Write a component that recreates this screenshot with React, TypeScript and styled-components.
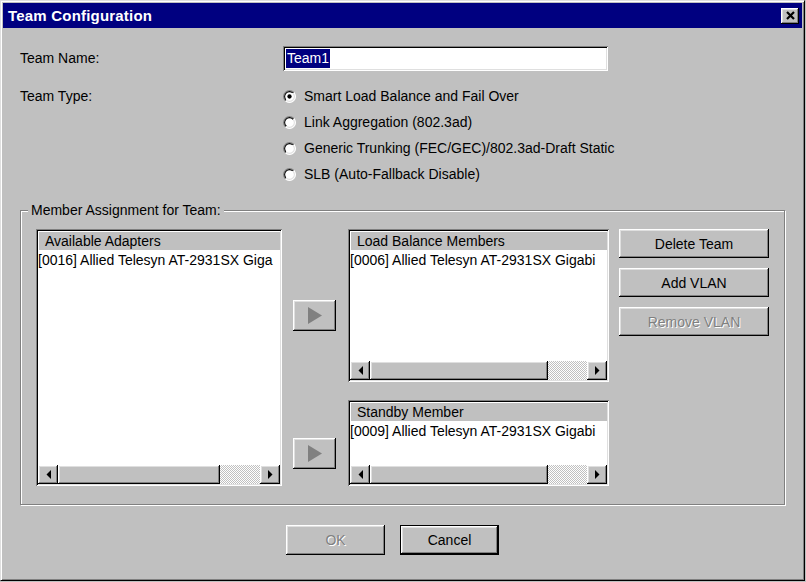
import React, { FC } from "react";
import styled, { createGlobalStyle } from "styled-components";

const GlobalStyle = createGlobalStyle`
  html, body {
    margin: 0;
    padding: 0;
    background: #c0c0c0;
  }
`;

const raised = `
  box-shadow: inset -1px -1px #000, inset 1px 1px #fff, inset -2px -2px #808080, inset 2px 2px #dfdfdf;
`;

const sunken = `
  box-shadow: inset 1px 1px #808080, inset -1px -1px #fff, inset 2px 2px #000, inset -2px -2px #dfdfdf;
`;

const Window = styled.div`
  width: 805px;
  height: 581px;
  box-sizing: border-box;
  background: #c0c0c0;
  border-top: 1px solid #dfdfdf;
  border-left: 1px solid #dfdfdf;
  border-right: 1px solid #000;
  border-bottom: 1px solid #000;
  box-shadow: inset 1px 1px #fff, inset -1px -1px #808080;
  padding: 2px;
  display: flex;
  flex-direction: column;
  font-family: "Liberation Sans", Arial, sans-serif;
  font-size: 14px;
  color: #000;
`;

const TitleBar = styled.div`
  height: 25px;
  background: #000080;
  display: flex;
  align-items: center;
  justify-content: space-between;
  padding: 0 3px 0 5px;
`;

const Title = styled.span`
  color: #fff;
  font-weight: bold;
  font-size: 15px;
  letter-spacing: 0.2px;
`;

const CloseButton = styled.div`
  width: 18px;
  height: 16px;
  background: #c0c0c0;
  ${raised}
  display: flex;
  align-items: center;
  justify-content: center;
`;

const Content = styled.div`
  display: flex;
  flex-direction: column;
  padding: 17px 17px 0 17px;
`;

const FieldRow = styled.div<{ $top?: number }>`
  display: flex;
  align-items: ${(p) => (p.$top ? "flex-start" : "center")};
  margin-top: ${(p) => p.$top || 0}px;
`;

const FieldLabel = styled.div`
  width: 263px;
  line-height: 26px;
`;

const TextInput = styled.div`
  width: 325px;
  height: 25px;
  box-sizing: border-box;
  background: #fff;
  ${sunken}
  padding: 3px 3px 0 3px;
  display: flex;
  align-items: flex-start;
`;

const Selected = styled.span`
  background: #000080;
  color: #fff;
  padding: 0 1px;
  line-height: 19px;
`;

const RadioList = styled.div`
  display: flex;
  flex-direction: column;
`;

const RadioRow = styled.div`
  height: 26px;
  display: flex;
  align-items: center;
  gap: 8px;
`;

const Group = styled.div`
  position: relative;
  margin-top: 23px;
  width: 765px;
  height: 295px;
  box-sizing: border-box;
  border: 1px solid #808080;
  box-shadow: inset 1px 1px #fff, 1px 1px #fff;
  padding: 18px 15px 0 15px;
  display: flex;
`;

const Legend = styled.span`
  position: absolute;
  top: -9px;
  left: 7px;
  padding: 0 3px;
  background: #c0c0c0;
  line-height: 17px;
`;

const ListBox = styled.div<{ $w: number; $h: number }>`
  width: ${(p) => p.$w}px;
  height: ${(p) => p.$h}px;
  box-sizing: border-box;
  background: #fff;
  ${sunken}
  padding: 2px;
  display: flex;
  flex-direction: column;
  overflow: hidden;
`;

const ListHeader = styled.div`
  height: 19px;
  flex: none;
  box-sizing: border-box;
  background: #c0c0c0;
  border-top: 1px solid #fff;
  border-left: 1px solid #fff;
  padding-left: 6px;
  line-height: 18px;
  white-space: nowrap;
`;

const ListItems = styled.div`
  flex: 1;
  padding: 2px 0 0 0;
  white-space: nowrap;
  overflow: hidden;
  line-height: 17px;
`;

const ScrollBar = styled.div`
  height: 19px;
  flex: none;
  display: flex;
  background: repeating-conic-gradient(#c0c0c0 0% 25%, #fff 0% 50%) 0 0 / 2px 2px;
`;

const ScrollButton = styled.div`
  width: 20px;
  flex: none;
  background: #c0c0c0;
  ${raised}
  display: flex;
  align-items: center;
  justify-content: center;
`;

const ScrollTrack = styled.div`
  flex: 1;
  display: flex;
`;

const ScrollThumb = styled.div<{ $frac: number }>`
  width: ${(p) => p.$frac * 100}%;
  background: #c0c0c0;
  ${raised}
`;

const MidArea = styled.div`
  margin-left: 11px;
  display: grid;
  grid-template-columns: 43px 261px;
  grid-template-rows: 153px 86px;
  column-gap: 12px;
  row-gap: 18px;
`;

const ArrowCell = styled.div`
  padding-top: 20px;
  display: flex;
  align-items: center;
`;

const ArrowButton = styled.div`
  width: 43px;
  height: 31px;
  background: #c0c0c0;
  ${raised}
  display: flex;
  align-items: center;
  justify-content: center;
`;

const SideButtons = styled.div`
  margin-left: 10px;
  display: flex;
  flex-direction: column;
  gap: 10px;
`;

const Button = styled.button<{ $w: number; $h: number; $default?: boolean }>`
  width: ${(p) => p.$w}px;
  height: ${(p) => p.$h}px;
  box-sizing: border-box;
  background: #c0c0c0;
  font-family: inherit;
  font-size: 14px;
  color: #000;
  padding: 0;
  border: ${(p) => (p.$default ? "1px solid #000" : "none")};
  ${raised}
  &:disabled {
    color: #808080;
    text-shadow: 1px 1px #fff;
  }
`;

const Footer = styled.div`
  margin-top: 20px;
  padding-left: 266px;
  display: flex;
  gap: 15px;
`;

const Radio: FC<{ checked?: boolean }> = ({ checked }) => (
  <svg width="13" height="13" viewBox="0 0 12 12">
    <defs>
      <linearGradient id="rOuter" x1="0" y1="0" x2="1" y2="1">
        <stop offset="0.5" stopColor="#808080" />
        <stop offset="0.5" stopColor="#fff" />
      </linearGradient>
      <linearGradient id="rInner" x1="0" y1="0" x2="1" y2="1">
        <stop offset="0.5" stopColor="#000" />
        <stop offset="0.5" stopColor="#dfdfdf" />
      </linearGradient>
    </defs>
    <circle cx="6" cy="6" r="5.5" fill="#fff" stroke="url(#rOuter)" strokeWidth="1" />
    <circle cx="6" cy="6" r="4.5" fill="#fff" stroke="url(#rInner)" strokeWidth="1" />
    {checked && <circle cx="6" cy="6" r="2" fill="#000" />}
  </svg>
);

const Tri: FC<{ dir: "left" | "right" }> = ({ dir }) => (
  <svg width="5" height="9" viewBox="0 0 5 9">
    <path d={dir === "left" ? "M5 0 L0.5 4.5 L5 9 Z" : "M0 0 L4.5 4.5 L0 9 Z"} fill="#000" />
  </svg>
);

const HScroll: FC<{ thumb: number }> = ({ thumb }) => (
  <ScrollBar>
    <ScrollButton>
      <Tri dir="left" />
    </ScrollButton>
    <ScrollTrack>
      <ScrollThumb $frac={thumb} />
    </ScrollTrack>
    <ScrollButton>
      <Tri dir="right" />
    </ScrollButton>
  </ScrollBar>
);

type AdapterListProps = {
  title: string;
  items: string[];
  width: number;
  height: number;
  thumb: number;
};

const AdapterList: FC<AdapterListProps> = ({ title, items, width, height, thumb }) => (
  <ListBox $w={width} $h={height}>
    <ListHeader>{title}</ListHeader>
    <ListItems>
      {items.map((item) => (
        <div key={item}>{item}</div>
      ))}
    </ListItems>
    <HScroll thumb={thumb} />
  </ListBox>
);

const MoveArrow: FC = () => (
  <ArrowCell>
    <ArrowButton>
      <svg width="16" height="17" viewBox="0 0 16 17">
        <path d="M1 0 L15 8.5 L1 17 Z" fill="#808080" />
      </svg>
    </ArrowButton>
  </ArrowCell>
);

const teamTypes = [
  "Smart Load Balance and Fail Over",
  "Link Aggregation (802.3ad)",
  "Generic Trunking (FEC/GEC)/802.3ad-Draft Static",
  "SLB (Auto-Fallback Disable)",
];

export default function App() {
  return (
    <>
      <GlobalStyle />
      <Window>
        <TitleBar>
          <Title>Team Configuration</Title>
          <CloseButton>
            <svg width="9" height="9" viewBox="0 0 9 9">
              <path d="M1 1 L8 8 M8 1 L1 8" stroke="#000" strokeWidth="2.2" />
            </svg>
          </CloseButton>
        </TitleBar>
        <Content>
          <FieldRow>
            <FieldLabel>Team Name:</FieldLabel>
            <TextInput>
              <Selected>Team1</Selected>
            </TextInput>
          </FieldRow>
          <FieldRow $top={12}>
            <FieldLabel>Team Type:</FieldLabel>
            <RadioList>
              {teamTypes.map((t, i) => (
                <RadioRow key={t}>
                  <Radio checked={i === 0} />
                  <span>{t}</span>
                </RadioRow>
              ))}
            </RadioList>
          </FieldRow>
          <Group>
            <Legend>Member Assignment for Team:</Legend>
            <AdapterList
              title="Available Adapters"
              items={["[0016] Allied Telesyn AT-2931SX Giga"]}
              width={247}
              height={257}
              thumb={0.8}
            />
            <MidArea>
              <MoveArrow />
              <AdapterList
                title="Load Balance Members"
                items={["[0006] Allied Telesyn AT-2931SX Gigabi"]}
                width={261}
                height={153}
                thumb={0.82}
              />
              <MoveArrow />
              <AdapterList
                title="Standby Member"
                items={["[0009] Allied Telesyn AT-2931SX Gigabi"]}
                width={261}
                height={86}
                thumb={0.82}
              />
            </MidArea>
            <SideButtons>
              <Button $w={150} $h={29}>Delete Team</Button>
              <Button $w={150} $h={29}>Add VLAN</Button>
              <Button $w={150} $h={29} disabled>
                Remove VLAN
              </Button>
            </SideButtons>
          </Group>
          <Footer>
            <Button $w={99} $h={30} disabled>
              OK
            </Button>
            <Button $w={99} $h={30} $default>
              Cancel
            </Button>
          </Footer>
        </Content>
      </Window>
    </>
  );
}
